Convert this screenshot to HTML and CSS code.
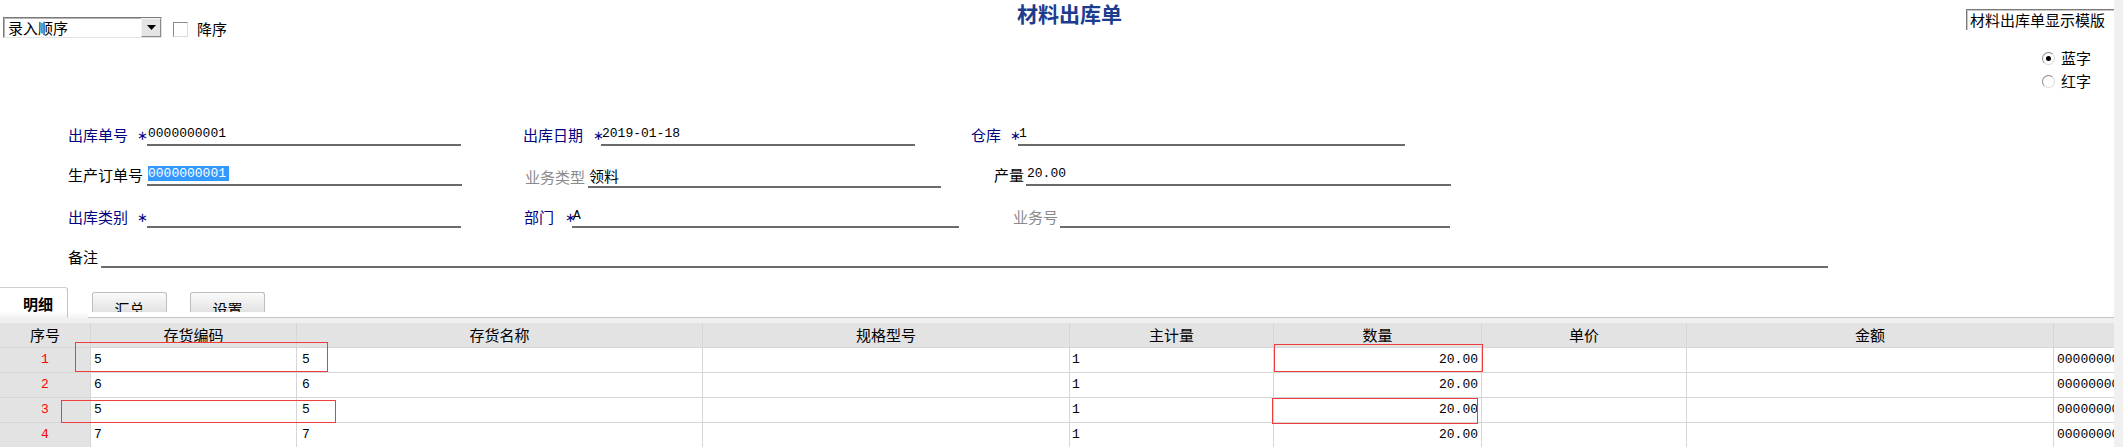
FILE: index.html
```html
<!DOCTYPE html>
<html lang="zh-CN">
<head>
<meta charset="utf-8">
<title>材料出库单</title>
<link rel="stylesheet" href="styles.css">
</head>
<body>
<div class="app">
  <main class="page">
    <header class="top">
      <div class="sort">
        <div class="combo">
          <span class="combo-text">录入顺序</span>
          <span class="combo-btn"><svg width="9" height="5" viewBox="0 0 9 5"><path d="M0 0H9L4.5 5Z" fill="#000"/></svg></span>
        </div>
        <span class="check"></span>
        <span class="check-label">降序</span>
      </div>
      <h1 class="title">材料出库单</h1>
      <div class="side">
        <div class="tpl">材料出库单显示模版</div>
        <div class="radios">
          <div class="radio-row"><span class="radio on"></span><span>蓝字</span></div>
          <div class="radio-row"><span class="radio"></span><span>红字</span></div>
        </div>
      </div>
    </header>

    <section class="form">
      <div class="frow h40">
        <div class="fld"><span class="lbl req w69">出库单号</span><span class="star w10">∗</span><span class="val num w314">0000000001</span></div>
        <div class="fld ml62"><span class="lbl req w70">出库日期</span><span class="star w8">∗</span><span class="val num w314">2019-01-18</span></div>
        <div class="fld ml56"><span class="lbl req w39">仓库</span><span class="star w8">∗</span><span class="val num w387">1</span></div>
      </div>
      <div class="frow h40">
        <div class="fld"><span class="lbl w79">生产订单号</span><span class="val num w315"><span class="sel">0000000001</span></span></div>
        <div class="fld ml63 low"><span class="lbl dim w63">业务类型</span><span class="val w353">领料</span></div>
        <div class="fld ml53"><span class="lbl w32">产量</span><span class="val num w425">20.00</span></div>
      </div>
      <div class="frow h42">
        <div class="fld"><span class="lbl req w69">出库类别</span><span class="star w10">∗</span><span class="val w314"></span></div>
        <div class="fld ml63"><span class="lbl req w41">部门</span><span class="star w7">∗</span><span class="val num w387">A</span></div>
        <div class="fld ml54"><span class="lbl dim w47">业务号</span><span class="val w390"></span></div>
      </div>
      <div class="frow h40">
        <div class="fld"><span class="lbl w33">备注</span><span class="val w1727"></span></div>
      </div>
    </section>

    <nav class="tabbar">
      <div class="tab-active">明细</div>
      <div class="tab-gap"></div>
      <div class="tab-rest">
        <div class="tab">汇总</div>
        <div class="tab tab2">设置</div>
      </div>
    </nav>
    <div class="band"></div>

    <div class="grid-wrap">
      <div class="grow ghead">
        <div class="gc">序号</div>
        <div class="gc">存货编码</div>
        <div class="gc">存货名称</div>
        <div class="gc">规格型号</div>
        <div class="gc">主计量</div>
        <div class="gc">数量</div>
        <div class="gc">单价</div>
        <div class="gc">金额</div>
        <div class="gc"></div>
      </div>
      <div class="grow">
        <div class="gc rn">1</div>
        <div class="gc d p3">5</div>
        <div class="gc d p5">5</div>
        <div class="gc d"></div>
        <div class="gc d p2">1</div>
        <div class="gc d r">20.00</div>
        <div class="gc d"></div>
        <div class="gc d"></div>
        <div class="gc d p4">0000000001</div>
      </div>
      <div class="grow">
        <div class="gc rn">2</div>
        <div class="gc d p3">6</div>
        <div class="gc d p5">6</div>
        <div class="gc d"></div>
        <div class="gc d p2">1</div>
        <div class="gc d r">20.00</div>
        <div class="gc d"></div>
        <div class="gc d"></div>
        <div class="gc d p4">0000000001</div>
      </div>
      <div class="grow">
        <div class="gc rn">3</div>
        <div class="gc d p3">5</div>
        <div class="gc d p5">5</div>
        <div class="gc d"></div>
        <div class="gc d p2">1</div>
        <div class="gc d r">20.00</div>
        <div class="gc d"></div>
        <div class="gc d"></div>
        <div class="gc d p4">0000000001</div>
      </div>
      <div class="grow">
        <div class="gc rn">4</div>
        <div class="gc d p3">7</div>
        <div class="gc d p5">7</div>
        <div class="gc d"></div>
        <div class="gc d p2">1</div>
        <div class="gc d r">20.00</div>
        <div class="gc d"></div>
        <div class="gc d"></div>
        <div class="gc d p4">0000000001</div>
      </div>
      <div class="mark mark-a"></div>
      <div class="mark mark-b"></div>
      <div class="mark mark-c"></div>
      <div class="mark mark-d"></div>
    </div>
  </main>
  <div class="vscroll"></div>
</div>
</body>
</html>
```

FILE: styles.css
```css
html, body {
  margin: 0;
  padding: 0;
  background: #fff;
}
body {
  width: 2123px;
  height: 447px;
  overflow: hidden;
  font-family: "Noto Sans CJK SC", sans-serif;
  font-size: 15px;
  color: #000;
}
.app {
  display: flex;
  height: 447px;
}
.page {
  width: 2114px;
  flex: none;
  overflow: hidden;
}
.vscroll {
  width: 9px;
  flex: none;
  background: #f0f0f0;
}

/* ---------- top ---------- */
.top {
  display: grid;
  grid-template-columns: 1017px 1fr 148px;
  height: 106px;
}
.sort {
  display: flex;
  align-items: flex-start;
  padding: 17px 0 0 3px;
}
.combo {
  width: 159px;
  height: 21px;
  box-sizing: border-box;
  border: 1px solid;
  border-color: #7a7a7a #e4e4e4 #e4e4e4 #7a7a7a;
  box-shadow: inset 1px 1px 0 #b4b4b4;
  display: flex;
}
.combo-text {
  flex: 1;
  padding-left: 4px;
  line-height: 19px;
}
.combo-btn {
  width: 20px;
  height: 19px;
  box-sizing: border-box;
  border: 1px solid;
  border-color: #f4f4f4 #8a8a8a #8a8a8a #f4f4f4;
  background: #e4e4e4;
  display: flex;
  align-items: center;
  justify-content: center;
}
.check {
  width: 15px;
  height: 15px;
  box-sizing: border-box;
  margin: 5px 0 0 11px;
  border: 1px solid;
  border-color: #8c8c8c #dcdcdc #dcdcdc #8c8c8c;
  background: #fff;
}
.check-label {
  margin: 2px 0 0 9px;
  line-height: 20px;
}
.title {
  margin: 0;
  font-size: 21px;
  line-height: 26px;
  font-weight: bold;
  color: #1c3c8e;
}
.side {
  display: flex;
  flex-direction: column;
}
.tpl {
  margin-top: 9px;
  height: 21px;
  box-sizing: border-box;
  border-top: 1px solid #7a7a7a;
  border-left: 1px solid #7a7a7a;
  box-shadow: inset 1px 1px 0 #c8c8c8;
  padding-left: 3px;
  line-height: 20px;
  white-space: nowrap;
  overflow: hidden;
}
.radios {
  margin: 19px 0 0 76px;
  display: flex;
  flex-direction: column;
  gap: 5px;
}
.radio-row {
  display: flex;
  align-items: center;
  gap: 6px;
  height: 18px;
  line-height: 18px;
}
.radio {
  width: 13px;
  height: 13px;
  box-sizing: border-box;
  border-radius: 50%;
  border: 1px solid;
  border-color: #8a8a8a #d8d8d8 #d8d8d8 #8a8a8a;
  background: #fff;
  display: flex;
  align-items: center;
  justify-content: center;
}
.radio.on::after {
  content: "";
  width: 5px;
  height: 5px;
  border-radius: 50%;
  background: #000;
}

/* ---------- form ---------- */
.form {
  padding-left: 68px;
}
.frow {
  display: flex;
  align-items: flex-end;
}
.h40 { height: 40px; }
.h42 { height: 42px; }
.fld {
  display: flex;
  align-items: flex-end;
  flex: none;
}
.fld.low { margin-bottom: -2px; }
.lbl {
  line-height: 20px;
  padding-bottom: 1px;
  white-space: nowrap;
}
.lbl.req { color: #000080; }
.lbl.dim { color: #8a8a8a; }
.star {
  color: #000080;
  font-family: "DejaVu Sans", sans-serif;
  font-size: 13px;
  line-height: 18px;
  padding-bottom: 1px;
}
.val {
  box-sizing: border-box;
  height: 22px;
  border-bottom: 2px solid #6a6a6a;
  padding-left: 1px;
  line-height: 19px;
  white-space: nowrap;
}
.num {
  font-family: "Liberation Mono", monospace;
  font-size: 13px;
}
.sel {
  background: #3399ff;
  color: #fff;
  display: inline-block;
  line-height: 15px;
  padding-right: 3px;
}
.ml53 { margin-left: 53px; }
.ml54 { margin-left: 54px; }
.ml56 { margin-left: 56px; }
.ml62 { margin-left: 62px; }
.ml63 { margin-left: 63px; }
.w7 { width: 7px; }
.w8 { width: 8px; }
.w10 { width: 10px; }
.w32 { width: 32px; }
.w33 { width: 33px; }
.w39 { width: 39px; }
.w41 { width: 41px; }
.w47 { width: 47px; }
.w63 { width: 63px; }
.w69 { width: 69px; }
.w70 { width: 70px; }
.w79 { width: 79px; }
.w314 { width: 314px; }
.w315 { width: 315px; }
.w353 { width: 353px; }
.w387 { width: 387px; }
.w390 { width: 390px; }
.w425 { width: 425px; }
.w1727 { width: 1727px; }

/* ---------- tabs ---------- */
.tabbar {
  display: flex;
  height: 31px;
  margin-top: 19px;
}
.tab-active {
  width: 68px;
  box-sizing: border-box;
  border-top: 1px solid #cfcfcf;
  border-right: 1px solid #c4c4c4;
  border-top-right-radius: 3px;
  background: linear-gradient(#fff 0, #fff 78%, #f2f2f2 100%);
  padding: 7px 0 0 23px;
  font-weight: bold;
  line-height: 18px;
}
.tab-gap {
  width: 20px;
  background: linear-gradient(#fff 78%, #f4f4f4 100%);
}
.tab-rest {
  flex: 1;
  display: flex;
  align-items: flex-start;
  border-bottom: 1px solid #c4c4c4;
  padding-left: 4px;
}
.tab {
  width: 75px;
  height: 20px;
  margin-top: 5px;
  box-sizing: border-box;
  border: 1px solid #bdbdbd;
  border-bottom: none;
  border-radius: 3px 3px 0 0;
  background: linear-gradient(#fbfbfb, #e2e2e2);
  overflow: hidden;
  text-align: center;
  padding-top: 7px;
  line-height: 18px;
}
.tab2 { margin-left: 23px; }
.band {
  height: 5px;
  background: #f0f0f0;
}

/* ---------- grid ---------- */
.grid-wrap {
  position: relative;
}
.grow {
  display: grid;
  grid-template-columns: 91px 206px 406px 367px 204px 208px 205px 367px 60px;
  height: 25px;
}
.gc {
  box-sizing: border-box;
  border-right: 1px solid #d6d6d6;
  border-bottom: 1px solid #d6d6d6;
  line-height: 24px;
  white-space: nowrap;
  overflow: hidden;
}
.ghead .gc {
  background: #e3e3e3;
  text-align: center;
}
.ghead .gc:last-child { border-right: none; }
.gc.rn {
  background: #e3e3e3;
  color: #f00;
  text-align: center;
  font-family: "Liberation Mono", monospace;
  font-size: 13px;
}
.gc.d {
  font-family: "Liberation Mono", monospace;
  font-size: 13px;
}
.gc.p2 { padding-left: 2px; }
.gc.p3 { padding-left: 3px; }
.gc.p4 { padding-left: 3px; border-right: none; }
.gc.p5 { padding-left: 5px; }
.gc.r { text-align: right; padding-right: 3px; }

.mark {
  position: absolute;
  box-sizing: border-box;
  border: 1.5px solid #f03c3c;
}
.mark-a { left: 75px; top: 19px; width: 253px; height: 30px; }
.mark-b { left: 61px; top: 77px; width: 275px; height: 23px; }
.mark-c { left: 1274px; top: 21px; width: 209px; height: 28px; }
.mark-d { left: 1272px; top: 75px; width: 206px; height: 26px; }
```
